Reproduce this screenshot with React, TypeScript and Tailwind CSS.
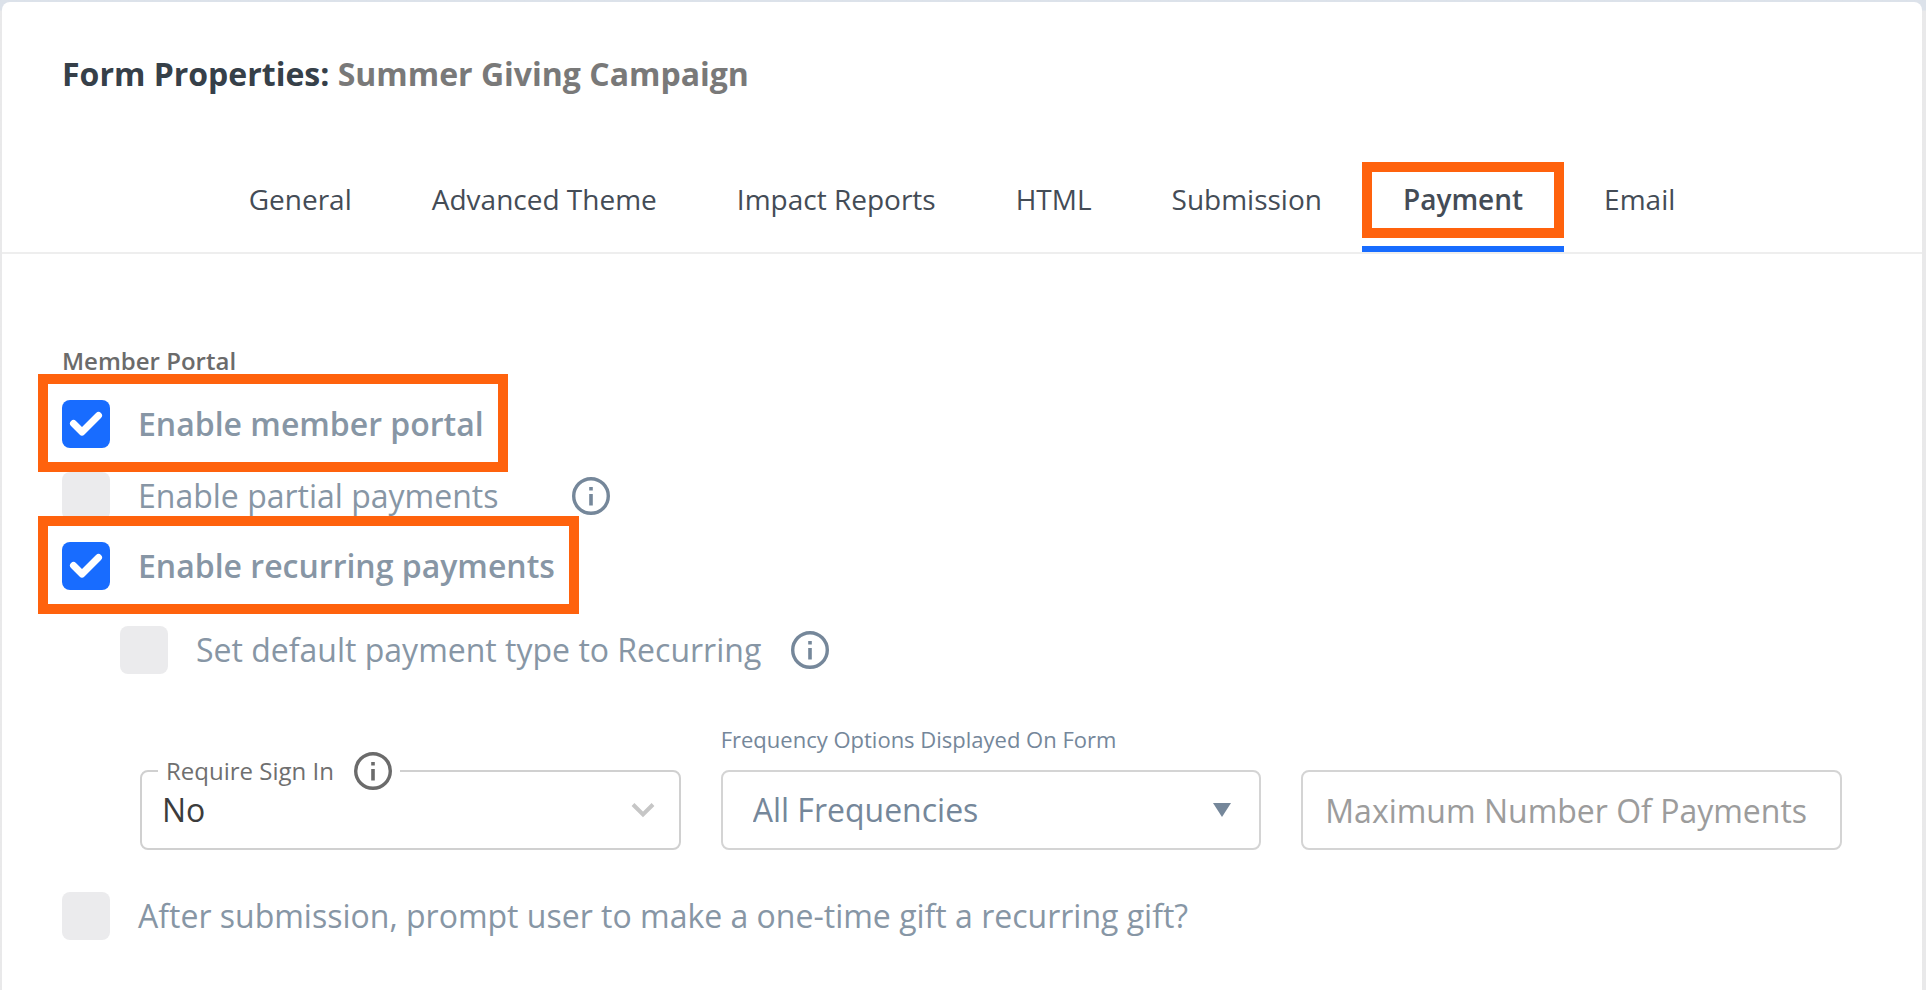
import { useState } from "react";

const tabs = ["General", "Advanced Theme", "Impact Reports", "HTML", "Submission", "Payment", "Email"];

export default function App() {
  const [activeTab, setActiveTab] = useState("Payment");

  return (
    <div className="flex min-h-screen flex-col bg-linear-to-b from-[#dce2ea] from-[10px] to-[#e9e9ea] to-[11px] pt-0.5 pr-1 pl-0.5 font-['Open_Sans',sans-serif]">
      <main className="grow rounded-t-lg bg-white">
        <h1 className="px-[60px] pt-12 text-[32px] leading-12 font-bold text-[#364049]">
          Form Properties: <span className="text-[#797979]">Summer Giving Campaign</span>
        </h1>

        {/* Tabs */}
        <nav className="mt-16 flex justify-center border-b-2 border-[#eeeeee]">
          {tabs.map((tab) => (
            <TabButton key={tab} label={tab} active={tab === activeTab} onClick={() => setActiveTab(tab)} />
          ))}
        </nav>

        {/* Payment settings */}
        <form className="px-[60px] pt-[91px] pb-12">
          <h2 className="text-2xl leading-8 font-semibold text-[#6b6b6b]">Member Portal</h2>

          <div className="mt-[23px]">
            <Option id="member-portal" label="Enable member portal" defaultChecked highlighted />
          </div>
          <div className="mt-6 flex items-center gap-[74px]">
            <Option id="partial-payments" label="Enable partial payments" />
            <InfoIcon className="text-[#75879a]" />
          </div>
          <div className="mt-[22px]">
            <Option id="recurring-payments" label="Enable recurring payments" defaultChecked highlighted />
          </div>
          <div className="mt-9 ml-[58px] flex items-center gap-[30px]">
            <Option id="default-recurring" label="Set default payment type to Recurring" />
            <InfoIcon className="text-[#75879a]" />
          </div>

          <div className="mt-[49px] mr-5 ml-[78px] grid grid-cols-3 items-end gap-10">
            <fieldset className="h-[98px] min-w-0 rounded-lg border-2 border-[#d0d0d0] pl-4">
              <legend className="flex h-[38px] items-center gap-5 px-2">
                <label htmlFor="require-sign-in" className="text-2xl leading-8 text-[#6f6f6f]">
                  Require Sign In
                </label>
                <InfoIcon className="text-[#6b6b6b]" />
              </legend>
              <div className="grid items-center">
                <select
                  id="require-sign-in"
                  className="col-start-1 row-start-1 h-10 w-full appearance-none bg-transparent pl-1 text-[32px] leading-10 text-[#3c3c3c] outline-none"
                >
                  <option>No</option>
                  <option>Yes</option>
                </select>
                <svg
                  viewBox="0 0 24 16"
                  className="pointer-events-none col-start-1 row-start-1 mr-6 h-4 w-6 justify-self-end"
                  fill="none"
                  stroke="#c6c6c6"
                  strokeWidth="4"
                >
                  <path d="M2 2.5 12 12.5 22 2.5" />
                </svg>
              </div>
            </fieldset>

            <div className="flex flex-col gap-[15px]">
              <label htmlFor="frequency" className="text-[22px] leading-8 text-[#75879a]">
                Frequency Options Displayed On Form
              </label>
              <div className="grid items-center">
                <select
                  id="frequency"
                  className="col-start-1 row-start-1 h-20 w-full appearance-none rounded-lg border-2 border-[#d4d4d4] bg-transparent pl-[30px] text-[32px] text-[#75879a] outline-none"
                >
                  <option>All Frequencies</option>
                </select>
                <svg
                  viewBox="0 0 18 14"
                  className="pointer-events-none col-start-1 row-start-1 mr-[30px] h-3.5 w-[18px] justify-self-end"
                  fill="#75879a"
                >
                  <path d="M0 0h18L9 14z" />
                </svg>
              </div>
            </div>

            <input
              type="text"
              aria-label="Maximum Number Of Payments"
              placeholder="Maximum Number Of Payments"
              className="h-20 w-full min-w-0 rounded-lg border-2 border-[#d4d4d4] px-[22px] text-[32px] text-[#3c3c3c] outline-none placeholder:text-[#9c9c9c]"
            />
          </div>

          <div className="mt-[42px]">
            <Option id="prompt-recurring" label="After submission, prompt user to make a one-time gift a recurring gift?" />
          </div>
        </form>
      </main>
    </div>
  );
}

function TabButton({ label, active, onClick }: { label: string; active: boolean; onClick: () => void }) {
  return (
    <button type="button" onClick={onClick} className="flex flex-col gap-2 text-[28px] leading-9 text-[#444c56]">
      <span className={active ? "relative px-[41px] pt-[19px] pb-[21px] font-semibold" : "px-10 pt-[19px] pb-[21px]"}>
        {label}
        {active && <Highlight className="inset-0" />}
      </span>
      <span className={active ? "h-1.5 w-full bg-[#186cff]" : "h-1.5 w-full"} />
    </button>
  );
}

function Option({
  id,
  label,
  defaultChecked = false,
  highlighted = false,
}: {
  id: string;
  label: string;
  defaultChecked?: boolean;
  highlighted?: boolean;
}) {
  return (
    <div className="relative flex w-fit items-center gap-7">
      <span className="grid shrink-0">
        <input
          id={id}
          type="checkbox"
          defaultChecked={defaultChecked}
          className="peer col-start-1 row-start-1 size-12 appearance-none rounded-lg bg-[#ebebed] checked:bg-[#186cff]"
        />
        <CheckMark />
      </span>
      <label
        htmlFor={id}
        className={highlighted ? "text-[32px] leading-12 font-semibold text-[#8796a5]" : "text-[32px] leading-12 text-[#8796a5]"}
      >
        {label}
      </label>
      {highlighted && <Highlight className="-top-[26px] -right-6 -bottom-6 -left-6" />}
    </div>
  );
}

// Orange callout frame drawn over a control
function Highlight({ className }: { className: string }) {
  return <span className={`pointer-events-none absolute z-10 border-10 border-[#ff620d] ${className}`} />;
}

function CheckMark() {
  return (
    <svg
      viewBox="0 0 48 48"
      className="pointer-events-none col-start-1 row-start-1 hidden size-12 peer-checked:block"
      fill="none"
      stroke="white"
      strokeWidth="7"
      strokeLinecap="round"
      strokeLinejoin="round"
    >
      <path d="M11.500 23.500 20 32 36.500 15.500" />
    </svg>
  );
}

function InfoIcon({ className }: { className: string }) {
  return (
    <svg viewBox="0 0 38 38" className={`size-[38px] shrink-0 ${className}`} fill="none" stroke="currentColor">
      <circle cx="19" cy="19" r="17.300" strokeWidth="3.400" />
      <path d="M19 17v11.500M19 10v3.500" strokeWidth="3.600" />
    </svg>
  );
}
